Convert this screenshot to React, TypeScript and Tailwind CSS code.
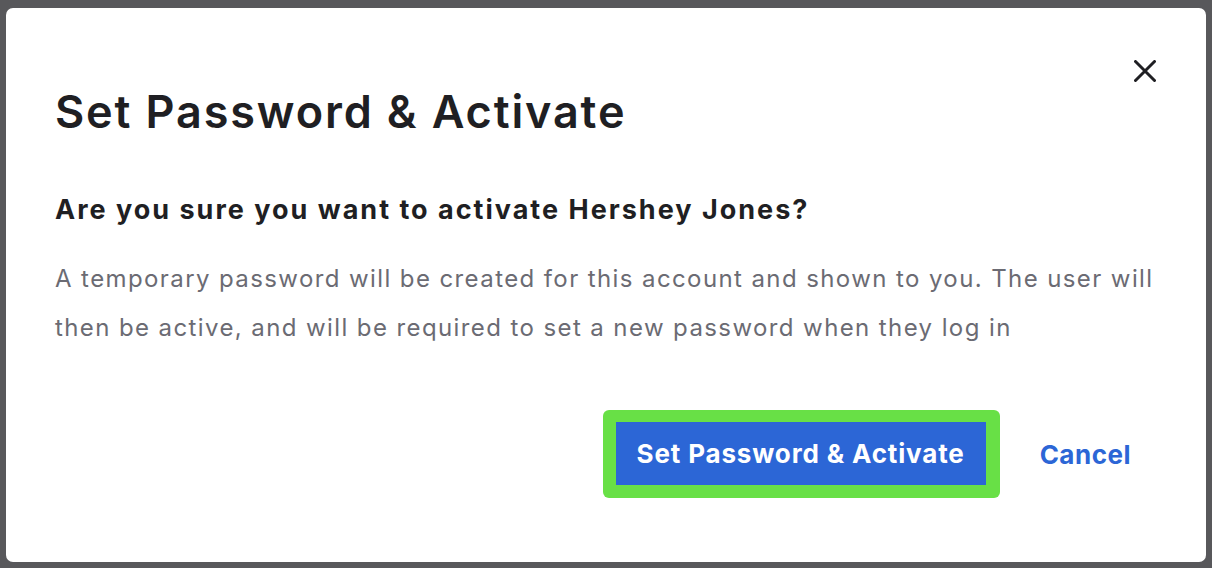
export default function App() {
  return (
    <div className="w-[1212px] h-[568px] bg-[#58585b] pt-2 px-[6px] pb-[6px]" style={{ fontFamily: "Inter, 'Noto Sans', sans-serif" }}>
      <div className="relative h-full bg-white rounded-[7px] px-[49px] pt-[77px]">
        <button className="absolute top-[52px] right-[50px] w-[22px] h-[22px]" aria-label="Close">
          <svg width="22" height="22" viewBox="0 0 22 22" fill="none" stroke="#1f1f23" strokeWidth="3" strokeLinecap="round">
            <path d="M1.5 1.5L20.5 20.5M20.5 1.5L1.5 20.5" />
          </svg>
        </button>

        <h1 className="text-[45px] leading-[53px] font-semibold text-[#1f1f23] tracking-[1.85px]">Set Password &amp; Activate</h1>

        <h2 className="mt-[55px] text-[27px] leading-[34px] font-bold text-[#1f1f23] tracking-[2px]">
          Are you sure you want to activate Hershey Jones?
        </h2>

        <p className="mt-[27px] text-[24px] leading-[49px] text-[#6b6b73] tracking-[1.4px]">
          A temporary password will be created for this account and shown to you. The user will then be active, and will be required to set a new password when they log in
        </p>

        <div className="mt-[58px] flex items-center justify-end gap-[40px] pr-[26px]">
          <div className="rounded-[6px] bg-[#68e046] pt-[12px] pb-[13px] pl-[13px] pr-[14px]">
            <button className="h-[63px] w-[370px] bg-[#2c66d6] text-white text-[26px] font-bold tracking-[0.85px]">
              Set Password &amp; Activate
            </button>
          </div>
          <button className="text-[26px] font-bold text-[#2c66d6] tracking-[0.5px]">Cancel</button>
        </div>
      </div>
    </div>
  );
}
